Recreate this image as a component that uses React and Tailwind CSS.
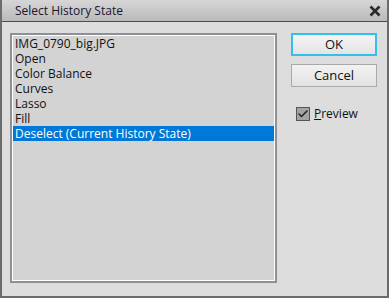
import { Check } from 'lucide-react'

const states = ['IMG_0790_big.JPG', 'Open', 'Color Balance', 'Curves', 'Lasso', 'Fill']

export default function App() {
  return (
    <div className="flex h-[298px] w-[389px] flex-col border-x-2 border-b-2 border-[#6b6b6b] bg-[#dddddd] font-['Open_Sans',sans-serif] text-[12px] text-[#111]">
      <div className="flex h-[22px] shrink-0 items-center justify-between border-b border-[#4c4c4c] bg-gradient-to-b from-[#d6d6d6] to-[#bababa] pl-[13px] pr-[5px]">
        <span className="text-[12px] text-[#1b1530]">Select History State</span>
        <svg width="12" height="12" viewBox="0 0 12 12" className="mr-[1px]">
          <path d="M1.5 1.5 L10.5 10.5 M10.5 1.5 L1.5 10.5" stroke="#2a2a2a" strokeWidth="2.6" />
        </svg>
      </div>
      <div className="flex flex-1 pl-[8px] pt-[11px] pb-[11px]">
        <div className="h-[250px] w-[267px] border-2 border-[#8f8f98] bg-[#d3d3d3] p-[1px] shadow-[inset_0_0_0_1px_#ffffff]">
          <ul className="leading-[15px]">
            {states.map((s) => (
              <li key={s} className="h-[15px] overflow-hidden pl-[2px]">{s}</li>
            ))}
            <li className="h-[15px] overflow-hidden bg-[#0078d7] pl-[2px] text-white">Deselect (Current History State)</li>
          </ul>
        </div>
        <div className="ml-[14px] flex flex-col">
          <button className="h-[23px] w-[86px] border-2 border-[#33c1ec] bg-gradient-to-b from-[#f4f4f4] to-[#e4e4e4] text-[13px] leading-none">OK</button>
          <button className="mt-[8px] h-[23px] w-[86px] border border-[#a9a9a9] bg-gradient-to-b from-[#f2f2f2] to-[#e2e2e2] text-[13px] leading-none">Cancel</button>
          <label className="mt-[18px] ml-[5px] flex items-center gap-[4px] text-[12px]">
            <span className="flex h-[14px] w-[14px] items-center justify-center border border-[#555] bg-[#a3a3a3]">
              <Check size={12} strokeWidth={3} color="#202020" />
            </span>
            <span><span className="underline">P</span>review</span>
          </label>
        </div>
      </div>
    </div>
  )
}
